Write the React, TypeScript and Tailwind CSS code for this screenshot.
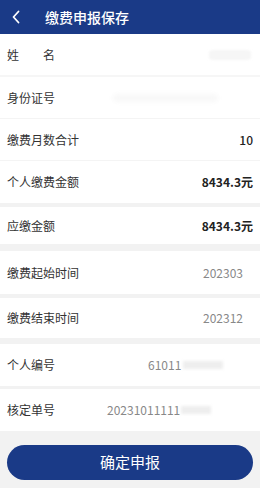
import React from "react";

const font = { fontFamily: '"Noto Sans CJK SC", "Noto Sans", sans-serif' };

function Row({ label, children, h = "h-[41px]" }: { label: React.ReactNode; children?: React.ReactNode; h?: string }) {
  return (
    <div className={`flex items-center justify-between bg-white px-[7px] ${h}`}>
      <div className="text-[12px] text-[#333]">{label}</div>
      {children}
    </div>
  );
}

export default function App() {
  return (
    <div className="flex h-[488px] w-[260px] flex-col bg-[#f2f2f2]" style={font}>
      <div className="flex h-[34px] items-center bg-[#1a3a87]">
        <svg className="ml-[11px]" width="10" height="14" viewBox="0 0 10 14">
          <path d="M7.5 1.5 L2.5 7 L7.5 12.5" fill="none" stroke="white" strokeWidth="1.8" strokeLinecap="round" strokeLinejoin="round" />
        </svg>
        <div className="ml-[24px] text-[14px] font-medium text-white">缴费申报保存</div>
      </div>

      <Row label={<span>姓<span className="inline-block w-[24px]" />名</span>}>
        <div className="mr-[2px] h-[10px] w-[42px] rounded-sm bg-[#f6f6f6] blur-[1px]" />
      </Row>
      <div className="h-[2px] bg-[#f6f6f6]" />
      <Row label="身份证号">
        <div className="mr-[35px] h-[8px] w-[105px] rounded-sm bg-[#f8f8f8] blur-[2px]" />
      </Row>
      <div className="h-[1px] bg-[#f4f4f4]" />
      <Row label="缴费月数合计">
        <div className="text-[12px] font-medium text-[#222]">10</div>
      </Row>
      <div className="h-[1px] bg-[#f4f4f4]" />
      <Row label="个人缴费金额" h="h-[42px]">
        <div className="text-[12px] font-semibold text-[#222]">8434.3元</div>
      </Row>
      <div className="h-[4px]" />
      <Row label="应缴金额" h="h-[37px]">
        <div className="text-[12px] font-semibold text-[#222]">8434.3元</div>
      </Row>
      <div className="h-[7px]" />
      <Row label="缴费起始时间" h="h-[43px]">
        <div className="mr-[10px] text-[12px] text-[#888]">202303</div>
      </Row>
      <div className="h-[4px]" />
      <Row label="缴费结束时间" h="h-[40px]">
        <div className="mr-[10px] text-[12px] text-[#888]">202312</div>
      </Row>
      <div className="h-[6px]" />
      <Row label="个人编号" h="h-[42px]">
        <div className="flex flex-1 items-center pl-[93px]">
          <span className="text-[12px] text-[#888]">61011</span>
          <span className="ml-[2px] h-[8px] w-[40px] bg-[#eeeeee] blur-[1.5px]" />
        </div>
      </Row>
      <div className="h-[3px]" />
      <Row label="核定单号" h="h-[42px]">
        <div className="flex flex-1 items-center pl-[52px]">
          <span className="text-[12px] text-[#888]">20231011111</span>
          <span className="ml-[1px] h-[8px] w-[30px] bg-[#eeeeee] blur-[1.5px]" />
        </div>
      </Row>
      <div className="px-[7px] pt-[14px]">
        <button className="flex h-[35px] w-full items-center justify-center rounded-full bg-[#1a3a87] text-[15px] text-white">
          确定申报
        </button>
      </div>
    </div>
  );
}
